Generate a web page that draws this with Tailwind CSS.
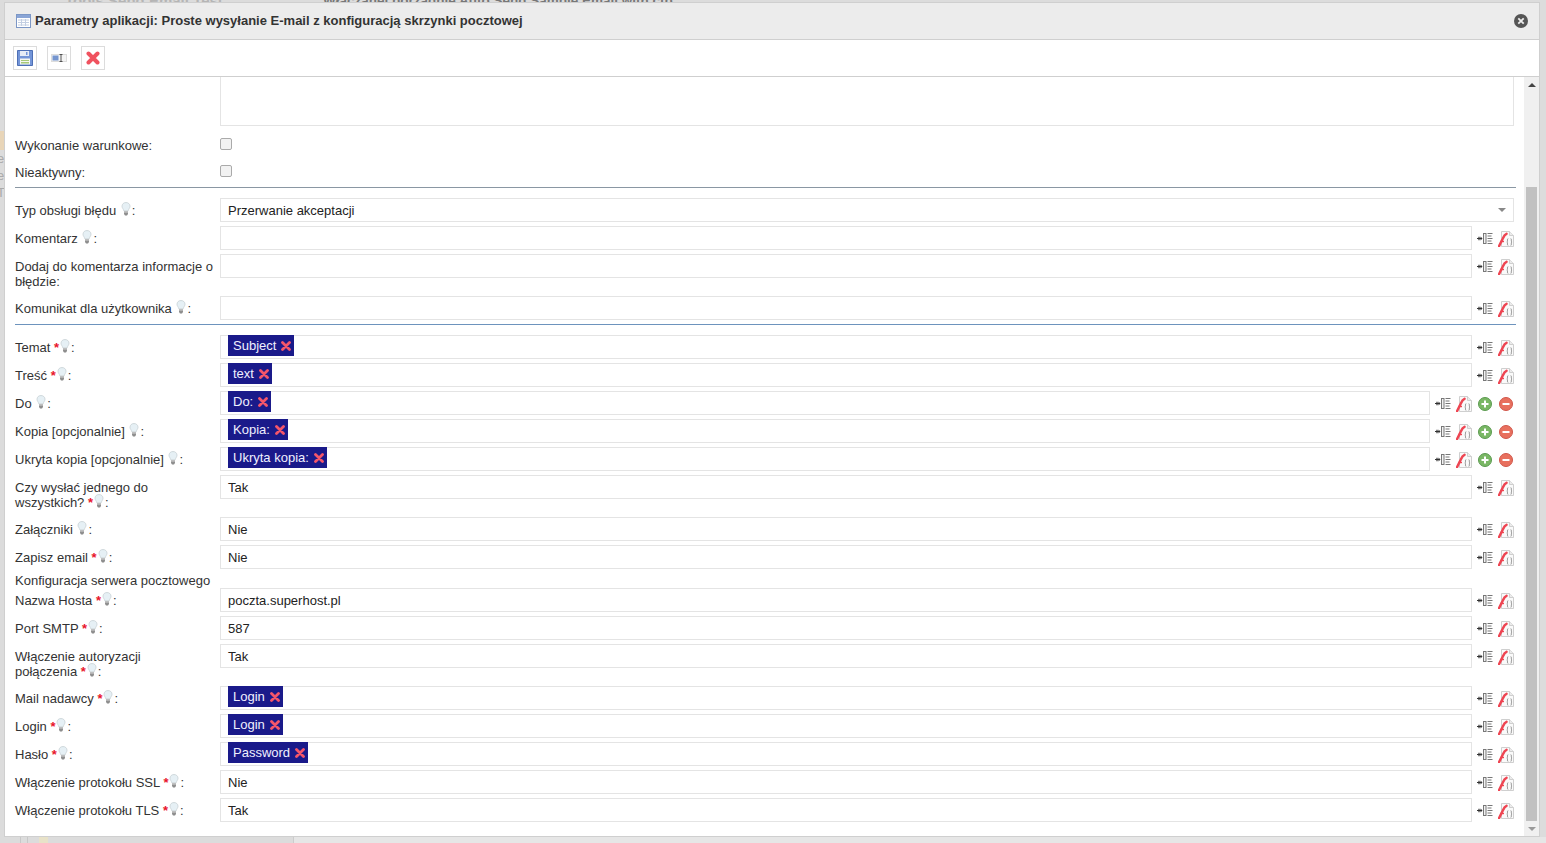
<!DOCTYPE html>
<html lang="pl">
<head>
    <meta charset="UTF-8">
    <title>Parametry aplikacji</title>
    <script src="https://cdn.jsdelivr.net/npm/@tailwindcss/browser@4"></script>
</head>
<body class="h-[843px] overflow-hidden bg-[#dcdcdc] font-['Liberation_Sans',Arial,sans-serif] text-[13px] text-[#333]">
    <!-- icons -->
    <svg class="hidden" xmlns="http://www.w3.org/2000/svg">
        <symbol id="bulb" viewBox="0 0 10 14">
            <path d="M5 .5C2.600.5 1 2.200 1 4.200c0 1.700 1.400 2.700 1.800 4.600h4.400C7.600 6.900 9 5.900 9 4.200 9 2.200 7.400.5 5 .5z" fill="#e6f0f5" stroke="#c8d0d4" stroke-width=".8"/>
            <path d="M3 9.500h4v2.500l-1 1.500H4l-1-1.500z" fill="#8c8c8c"/>
            <path d="M3 10.600h4" stroke="#d4d4d4" stroke-width=".6"/>
        </symbol>
        <symbol id="addlist" viewBox="0 0 16 13">
            <path d="M0 6.500h4M2 4.700v3.600" stroke="#333" stroke-width="1.200" fill="none"/>
            <path d="M3.500 4.500l2 2-2 2z" fill="#333"/>
            <rect x="6.500" y="1.500" width="2.500" height="10" fill="#f2f2f2" stroke="#777"/>
            <path d="M10.500 1.500h5M10.500 4h4M10.500 6.500h5M10.500 9h4M10.500 11.500h5" stroke="#777" stroke-width="1" fill="none"/>
        </symbol>
        <symbol id="fx" viewBox="0 0 16 16">
            <path d="M3.500.5h8l4 4v11h-12z" fill="#fafafa" stroke="#cfcfcf"/>
            <path d="M11.500.5v4h4" fill="#ececec" stroke="#cfcfcf"/>
            <path d="M10 7.500c-1 .4 0 2.700-1 3.500 1 .8 0 3.100 1 3.500M12.800 7.500c1 .4 0 2.700 1 3.500-1 .8 0 3.100-1 3.500" fill="none" stroke="#8a8a8a" stroke-width=".9"/>
            <path d="M1 15.300L4.800 7.500C5.800 5.200 6.800 3.500 8.500 2.800" fill="none" stroke="#ee4552" stroke-width="2.500" stroke-linecap="round"/>
            <path d="M2.500 10.500h3.500" stroke="#ee4552" stroke-width="1.400"/>
        </symbol>
        <symbol id="plus" viewBox="0 0 14 14">
            <circle cx="7" cy="7" r="6.500" fill="#7ab765" stroke="#5b9a50"/>
            <path d="M7 3.500v7M3.500 7h7" stroke="#fff" stroke-width="2"/>
        </symbol>
        <symbol id="minus" viewBox="0 0 14 14">
            <circle cx="7" cy="7" r="6.500" fill="#e8705e" stroke="#d0564a"/>
            <path d="M3.500 7h7" stroke="#fff" stroke-width="2"/>
        </symbol>
        <symbol id="redx" viewBox="0 0 10 10">
            <path d="M1.500 1.500l7 7M8.500 1.500l-7 7" stroke="#f5566a" stroke-width="2.800" stroke-linecap="round"/>
        </symbol>
    </svg>

    <!-- page behind the dialog -->
    <div class="absolute left-[65px] top-[-10px] text-[15px] text-[#b5b5b5] font-bold whitespace-nowrap">Tools Send Email Test</div>
    <div class="absolute left-[323px] top-[-9px] text-[13.500px] text-[#777] font-bold whitespace-nowrap">Włączanej porządnie Auto Send Sample Email with ctp</div>
    <div class="absolute left-0 top-[131px] w-[5px] h-[19px] bg-[#e8d5b8]"></div>
    <div class="absolute left-0 top-[150px] w-[4px] h-[50px] overflow-hidden text-[#aaa] leading-[17px]">
        <div class="ml-[-3px]">e</div>
        <div class="ml-[-3px]">e</div>
        <div class="ml-[-3px]">T</div>
    </div>
    <div class="absolute left-[20px] top-[837px] w-px h-[6px] bg-[#c8c8c8]"></div>
    <div class="absolute left-[27px] top-[837px] w-px h-[6px] bg-[#c8c8c8]"></div>
    <div class="absolute left-[39px] top-[837px] w-[9px] h-[6px] bg-[#e8e2c8]"></div>
    <div class="absolute left-[293px] top-[837px] right-0 h-[6px] bg-[#e6e6e6] border-l border-[#ccc]"></div>

    <!-- dialog -->
    <div class="absolute left-[4px] top-[2px] w-[1536px] h-[835px] border border-[#cfcfcf] bg-white flex flex-col">
        <div class="h-[37px] shrink-0 flex items-center bg-[#ececec] border-b border-[#cfcfcf] pl-[11px] pr-[11px]">
            <svg class="w-[15px] h-[14px] mr-[4px]" viewBox="0 0 15 14">
                <rect x=".5" y=".5" width="14" height="13" fill="#fff" stroke="#7c97c6"/>
                <rect x="1" y="1" width="13" height="3" fill="#8aa5d6"/>
                <path d="M2 6h11M2 8.500h11M2 11h11M5.500 5v7M9.500 5v7" stroke="#c2cee2" stroke-width="1"/>
            </svg>
            <span class="font-bold">Parametry aplikacji: Proste wysyłanie E-mail z konfiguracją skrzynki pocztowej</span>
            <svg class="ml-auto w-[14px] h-[14px]" viewBox="0 0 14 14">
                <circle cx="7" cy="7" r="7" fill="#555"/>
                <path d="M4.300 4.300l5.400 5.400M9.700 4.300l-5.400 5.400" stroke="#eee" stroke-width="1.800"/>
            </svg>
        </div>

        <div class="h-[37px] shrink-0 flex items-center gap-[10px] border-b border-[#cfcfcf] pl-[8px]">
            <div class="w-[24px] h-[24px] border border-[#dcdcdc] flex items-center justify-center">
                <svg class="w-[16px] h-[16px]" viewBox="0 0 16 16">
                    <path d="M.5.500h15v15H.5z" fill="#7395d8" stroke="#4d6fb5"/>
                    <rect x="3" y="1" width="9" height="5" fill="#e6ecf6"/>
                    <rect x="9" y="2" width="1.500" height="3" fill="#7395d8"/>
                    <rect x="3" y="8.500" width="10" height="6" fill="#f4f6f0"/>
                    <path d="M4 10.500h8" stroke="#a6c878" stroke-width="1"/>
                    <rect x="4" y="12" width="8" height="1.500" fill="#a6c878"/>
                </svg>
            </div>
            <div class="w-[24px] h-[24px] border border-[#dcdcdc] flex items-center justify-center">
                <svg class="w-[16px] h-[8px]" viewBox="0 0 16 8">
                    <rect x=".5" y=".5" width="15" height="7" fill="#f4f4f4" stroke="#ddd"/>
                    <rect x="1.500" y="1.500" width="6" height="5" fill="#7595cf"/>
                    <path d="M8.500.500h3M10 .5v7M8.500 7.500h3" stroke="#444" stroke-width=".9"/>
                </svg>
            </div>
            <div class="w-[24px] h-[24px] border border-[#dcdcdc] flex items-center justify-center">
                <svg class="w-[14px] h-[14px]" viewBox="0 0 14 14">
                    <path d="M2.500 2.500l9 9M11.500 2.500l-9 9" stroke="#f0525f" stroke-width="4" stroke-linecap="round"/>
                </svg>
            </div>
        </div>

        <div class="flex-1 flex min-h-0">
            <div class="flex-1 pl-[10px] pr-[8px]">
                <div class="pr-[2px]">
                    <div class="ml-[205px] h-[49px] border border-t-0 border-[#e4e4e4]"></div>
                    <div class="mt-[7px] mb-[4px] flex h-[23px]">
                        <label class="w-[205px] pt-[5px] leading-[15px]">Wykonanie warunkowe:</label>
                        <span class="mt-[5px] w-[12px] h-[12px] rounded-[2px] border border-[#aaa] bg-[#f2f2f2]"></span>
                    </div>
                    <div class="mb-[4px] flex h-[23px]">
                        <label class="w-[205px] pt-[5px] leading-[15px]">Nieaktywny:</label>
                        <span class="mt-[5px] w-[12px] h-[12px] rounded-[2px] border border-[#aaa] bg-[#f2f2f2]"></span>
                    </div>
                </div>
                <div class="h-px bg-[#8a97a3]"></div>
                <div id="group-error" class="pr-[2px] mt-[10px]"></div>
                <div class="h-px bg-[#6d93bd]"></div>
                <div id="group-params" class="pr-[2px] mt-[10px]"></div>
            </div>

            <!-- scrollbar -->
            <div class="w-[15px] shrink-0 bg-[#f0f0f0] flex flex-col items-center">
                <div class="h-[17px] flex items-center"><div class="mt-[-1px] w-0 h-0 border-x-[4px] border-x-transparent border-b-[4px] border-b-[#444]"></div></div>
                <div class="mt-[93px] w-[11px] h-[634px] bg-[#c1c1c1]"></div>
                <div class="flex-1 flex items-center"><div class="w-0 h-0 border-x-[4px] border-x-transparent border-t-[4px] border-t-[#999]"></div></div>
            </div>
        </div>
    </div>

    <script>
        const errorRows = [
            { label: 'Typ obsługi błędu', hint: true, value: 'Przerwanie akceptacji', select: true },
            { label: 'Komentarz', hint: true, value: '' },
            { label: 'Dodaj do komentarza informacje o<br>błędzie:', value: '', tall: true, raw: true },
            { label: 'Komunikat dla użytkownika', hint: true, value: '' }
        ];
        const paramRows = [
            { label: 'Temat', req: true, chip: 'Subject' },
            { label: 'Treść', req: true, chip: 'text' },
            { label: 'Do', hint: true, chip: 'Do:', multi: true },
            { label: 'Kopia [opcjonalnie]', hint: true, chip: 'Kopia:', multi: true },
            { label: 'Ukryta kopia [opcjonalnie]', hint: true, chip: 'Ukryta kopia:', multi: true },
            { label: 'Czy wysłać jednego do<br>wszystkich?', req: true, value: 'Tak', tall: true },
            { label: 'Załączniki', hint: true, value: 'Nie' },
            { label: 'Zapisz email', req: true, value: 'Nie' },
            { heading: 'Konfiguracja serwera pocztowego' },
            { label: 'Nazwa Hosta', req: true, value: 'poczta.superhost.pl' },
            { label: 'Port SMTP', req: true, value: '587' },
            { label: 'Włączenie autoryzacji<br>połączenia', req: true, value: 'Tak', tall: true },
            { label: 'Mail nadawcy', req: true, chip: 'Login' },
            { label: 'Login', req: true, chip: 'Login' },
            { label: 'Hasło', req: true, chip: 'Password' },
            { label: 'Włączenie protokołu SSL', req: true, value: 'Nie' },
            { label: 'Włączenie protokołu TLS', req: true, value: 'Tak' }
        ];

        const bulb = '<svg class="inline-block w-[10px] h-[14px] -my-[4px] align-[3px]"><use href="#bulb"/></svg>';

        function labelHtml(row) {
            if (row.raw) return row.label;
            if (row.req) return `${row.label} <span class="font-bold text-[#e8142b] mr-px">*</span>${bulb}<span class="ml-px">:</span>`;
            if (row.hint) return `${row.label} <span class="ml-px">${bulb}</span><span class="ml-px">:</span>`;
            return row.label;
        }

        function rowHtml(row) {
            if (row.heading) {
                return `<div class="h-[15px] leading-[15px]">${row.heading}</div>`;
            }
            const chip = row.chip
                ? `<span class="ml-[7px] -mt-px h-[21px] flex items-center bg-[#1a1a8a] text-[#f0f0ff] pl-[5px] pr-[3px]">${row.chip}<svg class="ml-[5px] w-[10px] h-[10px]"><use href="#redx"/></svg></span>`
                : '';
            const value = row.value ? `<span class="pl-[7px] pt-[2px] self-center">${row.value}</span>` : '';
            const caret = row.select
                ? '<span class="ml-auto mr-[7px] self-center w-0 h-0 border-x-[4px] border-x-transparent border-t-[4px] border-t-[#888]"></span>'
                : '';
            const tools = row.select ? '' : `
                <div class="${row.multi ? 'w-[84px]' : 'w-[42px]'} h-[24px] shrink-0 flex items-center pl-[5px] gap-[5px]">
                    <svg class="w-[16px] h-[13px]"><use href="#addlist"/></svg>
                    <svg class="w-[16px] h-[16px] mt-[2px]"><use href="#fx"/></svg>
                    ${row.multi ? '<svg class="w-[14px] h-[14px] ml-[1px] mt-[1px]"><use href="#plus"/></svg><svg class="w-[14px] h-[14px] ml-[2px] mt-[1px]"><use href="#minus"/></svg>' : ''}
                </div>`;
            return `
                <div class="flex mb-[4px] ${row.tall ? 'h-[38px]' : 'h-[24px]'}">
                    <label class="w-[205px] shrink-0 pt-[5px] leading-[15px] whitespace-nowrap">${labelHtml(row)}</label>
                    <div class="flex-1 h-[24px] border border-[#e4e4e4] flex items-start text-[#222] min-w-0">${chip}${value}${caret}</div>
                    ${tools}
                </div>`;
        }

        document.getElementById('group-error').innerHTML = errorRows.map(rowHtml).join('');
        document.getElementById('group-params').innerHTML = paramRows.map(rowHtml).join('');
    </script>
</body>
</html>
